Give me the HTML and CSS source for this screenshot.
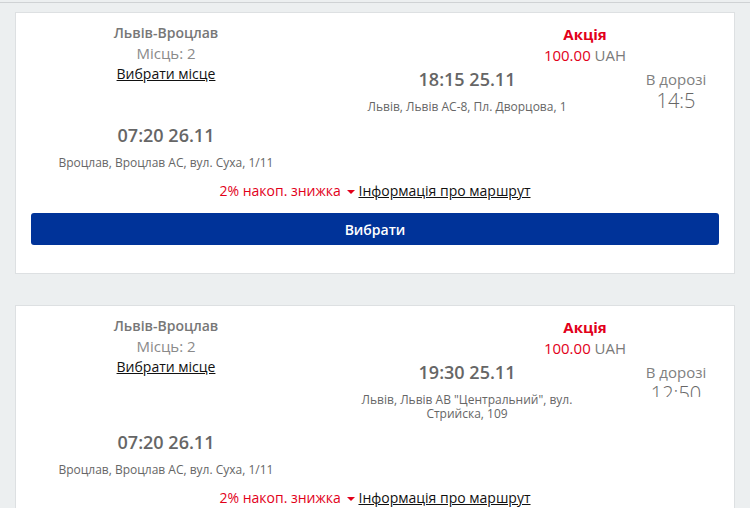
FILE: index.html
```html
<!DOCTYPE html>
<html lang="uk">
<head>
<meta charset="utf-8">
<link rel="stylesheet" href="styles.css">
</head>
<body>
<div class="page">
  <div class="card">
    <div class="top">
      <div class="left">
        <div class="route">Львів-Вроцлав</div>
        <div class="seats">Місць: 2</div>
        <a class="seat-link">Вибрати місце</a>
      </div>
      <div class="right">
        <div class="price">
          <div class="promo">Акція</div>
          <div class="amount"><span class="sum">100.00</span> UAH</div>
        </div>
        <div class="trip">
          <div class="dep">
            <div class="time">18:15 25.11</div>
            <div class="addr">Львів, Львів АС-8, Пл. Дворцова, 1</div>
          </div>
          <div class="dur">
            <div class="dur-label">В дорозі</div>
            <div class="dur-val">14:5</div>
          </div>
        </div>
      </div>
    </div>
    <div class="arrival">
      <div class="time">07:20 26.11</div>
      <div class="addr">Вроцлав, Вроцлав АС, вул. Суха, 1/11</div>
    </div>
    <div class="extras">
      <span class="discount">2% накоп. знижка</span><span class="caret"></span> <a class="info">Інформація про маршрут</a>
    </div>
    <button class="choose">Вибрати</button>
  </div>

  <div class="card">
    <div class="top">
      <div class="left">
        <div class="route">Львів-Вроцлав</div>
        <div class="seats">Місць: 2</div>
        <a class="seat-link">Вибрати місце</a>
      </div>
      <div class="right">
        <div class="price">
          <div class="promo">Акція</div>
          <div class="amount"><span class="sum">100.00</span> UAH</div>
        </div>
        <div class="trip">
          <div class="dep">
            <div class="time">19:30 25.11</div>
            <div class="addr">Львів, Львів АВ "Центральний", вул. Стрийска, 109</div>
          </div>
          <div class="dur dur-clip">
            <div class="dur-label">В дорозі</div>
            <div class="dur-val">12:50</div>
          </div>
        </div>
      </div>
    </div>
    <div class="arrival">
      <div class="time">07:20 26.11</div>
      <div class="addr">Вроцлав, Вроцлав АС, вул. Суха, 1/11</div>
    </div>
    <div class="extras">
      <span class="discount">2% накоп. знижка</span><span class="caret"></span> <a class="info">Інформація про маршрут</a>
    </div>
    <button class="choose">Вибрати</button>
  </div>
</div>
</body>
</html>
```
FILE: styles.css
```css
html, body {
  margin: 0;
  padding: 0;
  background: #eceff0;
  font-family: "Open Sans", "Liberation Sans", sans-serif;
  overflow: hidden;
}
.page {
  margin-top: 2px;
  border-top: 1px solid #cfd2d4;
  padding: 9px 15px 0 15px;
  display: flex;
  flex-direction: column;
  gap: 31px;
}
.card {
  background: #fff;
  border: 1px solid #dde0e2;
  padding: 10px 15px 28px 15px;
  display: flex;
  flex-direction: column;
}
.top {
  display: grid;
  grid-template-columns: 270px 1fr;
}
.left {
  display: flex;
  flex-direction: column;
  align-items: center;
}
.route {
  font-size: 14px;
  font-weight: 600;
  color: #777;
  line-height: 20px;
}
.seats {
  font-size: 15px;
  color: #8a8a8a;
  line-height: 20px;
}
.seat-link {
  font-size: 14px;
  color: #111;
  text-decoration: underline;
  line-height: 20px;
  margin-top: 1px;
}
.right {
  display: flex;
  flex-direction: column;
}
.price {
  padding-left: 150px;
  text-align: center;
}
.promo {
  font-size: 15px;
  font-weight: 700;
  color: #e2001a;
  line-height: 20px;
  margin-top: 1px;
}
.amount {
  font-size: 15px;
  color: #7a7a7a;
  line-height: 23px;
}
.sum {
  color: #e2001a;
}
.trip {
  display: grid;
  grid-template-columns: 332px 1fr;
}
.dep {
  display: flex;
  flex-direction: column;
  align-items: center;
}
.time {
  font-size: 18px;
  font-weight: 600;
  color: #666;
  line-height: 24px;
}
.addr {
  font-size: 12px;
  color: #666;
  line-height: 14px;
  text-align: center;
  max-width: 232px;
  margin-top: 9px;
}
.dur {
  display: flex;
  flex-direction: column;
  align-items: center;
  color: #888;
  padding-top: 1px;
}
.dur-label {
  font-size: 15px;
  line-height: 22px;
  color: #808080;
}
.dur-val {
  font-size: 20px;
  font-weight: 300;
  line-height: 22px;
  color: #666;
}
.dur-clip {
  height: 36px;
  overflow: hidden;
}
.arrival {
  width: 270px;
  display: flex;
  flex-direction: column;
  align-items: center;
  margin-top: 9px;
}
.arrival .addr {
  max-width: none;
}
.extras {
  text-align: center;
  font-size: 14px;
  line-height: 20px;
  margin-top: 11px;
}
.discount {
  color: #e2001a;
}
.caret {
  display: inline-block;
  width: 0;
  height: 0;
  border-left: 4px solid transparent;
  border-right: 4px solid transparent;
  border-top: 4px solid #e2001a;
  vertical-align: middle;
  margin-left: 6px;
}
.info {
  color: #111;
  text-decoration: underline;
}
.choose {
  margin-top: 12px;
  height: 32px;
  border: 0;
  border-radius: 3px;
  background: #003399;
  color: #fff;
  font-family: "Open Sans", "Liberation Sans", sans-serif;
  font-size: 14px;
  font-weight: 600;
}
```
